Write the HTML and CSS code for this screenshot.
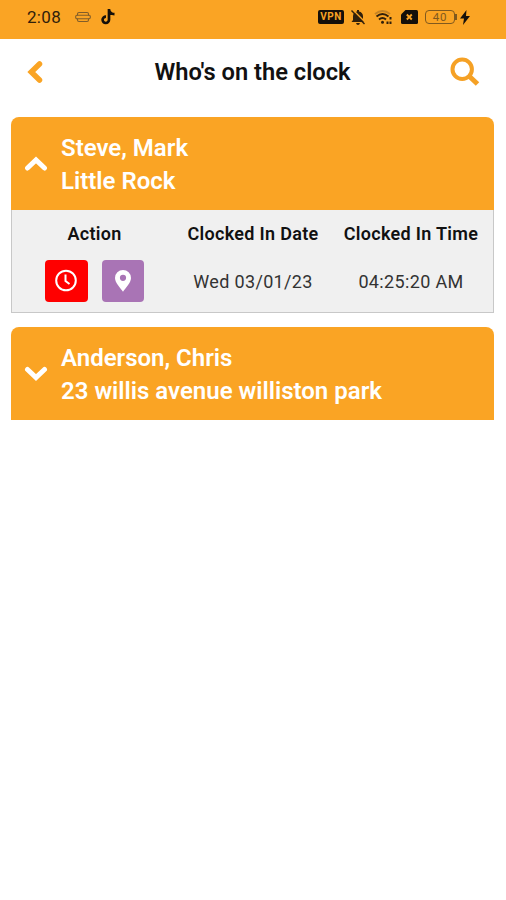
FILE: index.html
```html
<!DOCTYPE html>
<html lang="en">
<head>
<meta charset="utf-8">
<title>Who's on the clock</title>
<link rel="stylesheet" href="styles.css">
</head>
<body>
<div class="status">
  <span class="time">2:08</span>
  <svg class="keyboard" width="16" height="12" viewBox="0 0 16 12" fill="none" stroke="#805d2a" stroke-width="1.1"><path d="M2.500 4.500V3Q2.500 1.500 4 1.500H12Q13.500 1.500 13.500 3V4.500"/><rect x=".7" y="4.300" width="14.600" height="3.400" rx="1.200"/><path d="M2.500 7.700V9Q2.500 10.500 4 10.500H12Q13.500 10.500 13.500 9V7.700"/></svg>
  <svg class="note" width="14" height="16" viewBox="0 0 14 16" fill="none" stroke="#15100a" stroke-width="2.700"><path d="M8 0V10.800A3.200 3.200 0 1 1 5 7.600M8 1Q9 5 13.500 5.200"/></svg>
  <div class="indicators">
    <span class="vpn">VPN</span>
    <svg class="bell" width="16" height="16" viewBox="0 0 16 16"><path fill="#30200b" d="M7 1h2v1.500c2.500.500 4 2.300 4 4.800V11l1.500 2h-13L3 11V7.300C3 4.800 4.500 3 7 2.500zM6 14h4q-.500 2-2 2t-2-2z"/><path d="M3 1L16 14" stroke="#faa424" stroke-width="1.500"/><path d="M1.500 1.500L14.500 15" stroke="#30200b" stroke-width="1.400"/></svg>
    <svg class="wifi" width="19" height="16" viewBox="0 0 19 16" fill="none" stroke-width="2"><path stroke="#c58426" d="M1 5Q8.500-1 16 5"/><path stroke="#30200b" d="M2.500 7.500Q8.500 2.500 14.500 7.500M5 10.500Q8.500 7.500 12 10.500"/><circle cx="8.500" cy="13.300" r="1.500" fill="#30200b"/><path stroke="#30200b" d="M16.500 8v2.500M16.500 12.500v2.500M13.500 12.500v2.500"/></svg>
    <svg class="sim" width="17" height="14" viewBox="0 0 17 14"><path fill="#15100a" d="M4.500 0H15.500Q17 0 17 1.500V12.500Q17 14 15.500 14H1.500Q0 14 0 12.500V4.500z"/><path d="M5.800 4.500l5 5M10.800 4.500l-5 5" stroke="#faa424" stroke-width="1.900"/></svg>
    <span class="battery">40</span>
    <svg class="bolt" width="10" height="15" viewBox="0 0 10 15"><path fill="#15100a" d="M6.500 0L0 8.500H4L3 15L10 6H6z"/></svg>
  </div>
</div>
<header class="bar">
  <svg class="back" width="16" height="22" viewBox="0 0 16 22"><path d="M12.500 3L4.300 11l8.200 8" fill="none" stroke="#faa424" stroke-width="5.500" stroke-linecap="round"/></svg>
  <h1>Who's on the clock</h1>
  <svg class="search" width="30" height="30" viewBox="0 0 30 30" fill="none" stroke="#f5a125"><circle cx="12.200" cy="12.200" r="9.700" stroke-width="4"/><path d="M19 19l8.500 8" stroke-width="5"/></svg>
</header>
<main>
  <section class="card">
    <div class="head">
      <svg class="chevron" width="24" height="16" viewBox="0 0 24 16"><path d="M3.500 12L12 4l8.500 8"/></svg>
      <div class="who"><div>Steve, Mark</div><div>Little Rock</div></div>
    </div>
    <div class="details">
      <div class="label">Action</div><div class="label">Clocked In Date</div><div class="label">Clocked In Time</div>
      <div class="actions">
        <button class="btn red"><svg width="24" height="24" viewBox="0 0 24 24" fill="none" stroke="#fff"><circle cx="12" cy="11.500" r="9.800" stroke-width="2"/><path d="M11.500 5.500V12L15.500 15" stroke-width="2"/></svg></button>
        <button class="btn purple"><svg width="18" height="22" viewBox="0 0 18 22"><path fill="#fff" fill-rule="evenodd" d="M9 0a8 8 0 0 1 8 8c0 5-5.500 10-8 13.700C6.500 18 1 13 1 8a8 8 0 0 1 8-8zm0 4.700a3.100 3.100 0 1 0 0 6.200 3.100 3.100 0 0 0 0-6.200z"/></svg></button>
      </div>
      <div class="value">Wed 03/01/23</div><div class="value">04:25:20 AM</div>
    </div>
  </section>
  <section class="card">
    <div class="head">
      <svg class="chevron" width="24" height="16" viewBox="0 0 24 16"><path d="M3.500 3.500L12 11.500l8.500-8"/></svg>
      <div class="who"><div>Anderson, Chris</div><div>23 willis avenue williston park</div></div>
    </div>
  </section>
</main>
</body>
</html>
```
FILE: styles.css
```css
* { box-sizing: border-box; }
body { margin: 0; background: #fff; font-family: Roboto, sans-serif; color: #111; }
.status { height: 39px; background: #faa424; display: flex; align-items: center; padding: 0 36px 5px 27px; }
.time { width: 36px; font-size: 17px; line-height: 20px; letter-spacing: .3px; color: #30200b; }
.keyboard { margin-left: 12px; }
.note { margin-left: 10px; }
.indicators { margin-left: auto; display: flex; align-items: center; }
.vpn { width: 26px; height: 14px; border-radius: 2px; background: #15100a; color: #faa424; font-size: 10px; font-weight: 700; line-height: 14px; text-align: center; letter-spacing: .5px; }
.bell { margin-left: 6px; }
.wifi { margin-left: 8px; }
.sim { margin-left: 8px; }
.battery { position: relative; width: 30px; height: 14px; margin-left: 7px; border: 1.5px solid #80591e; border-radius: 4px; font-size: 11.500px; line-height: 12px; text-align: center; letter-spacing: .8px; color: #80591e; }
.battery::after { content: ""; position: absolute; right: -3px; top: 3px; width: 2px; height: 6px; background: #80591e; }
.bolt { margin-left: 5px; }
.bar { height: 78px; display: flex; align-items: center; justify-content: space-between; padding: 0 26px 13px 27px; }
h1 { margin: 0 0 0 12px; font-size: 23.700px; line-height: 28px; font-weight: 600; white-space: nowrap; }
main { display: flex; flex-direction: column; gap: 14px; padding: 0 12px 0 11px; }
.card { border-radius: 8px 8px 0 0; overflow: hidden; }
.head { height: 93px; background: #faa424; display: flex; align-items: center; padding: 0 13px; }
.chevron { fill: none; stroke: #fff; stroke-width: 5; stroke-linecap: round; }
.who { margin-left: 13px; padding-top: 2px; font-size: 24px; line-height: 32.500px; font-weight: 600; color: #fff; white-space: nowrap; }
.details { height: 103px; background: #f0f0f0; border: 1px solid #c8c8c8; border-top: 0; display: grid; grid-template-columns: 165px 152px 1fr; grid-template-rows: 46px 50px; align-items: center; justify-items: center; }
.label { padding-top: 1px; font-size: 18px; line-height: 22px; font-weight: 600; letter-spacing: .3px; white-space: nowrap; }
.value { padding-top: 1px; font-size: 18px; line-height: 22px; letter-spacing: .35px; color: #333; white-space: nowrap; }
.actions { display: flex; gap: 14px; }
.btn { width: 42.500px; height: 42px; border: 0; border-radius: 4px; padding: 0; display: flex; align-items: center; justify-content: center; }
.red { background: #f00; }
.purple { background: #a974b5; }
```
